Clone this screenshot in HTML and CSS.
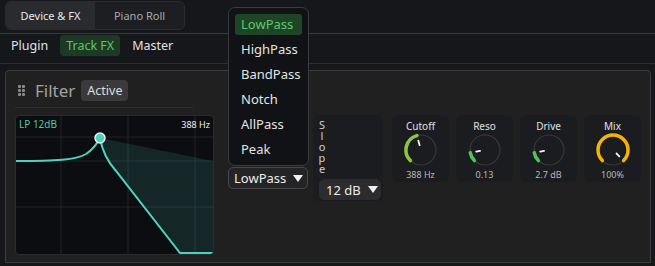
FILE: index.html
```html
<!DOCTYPE html>
<html lang="en">
<head>
    <meta charset="UTF-8">
    <title>Filter</title>
    <link rel="stylesheet" href="styles.css">
</head>
<body>
    <div class="tabs">
        <div class="tab-group">
            <div class="tab active">Device &amp; FX</div>
            <div class="tab">Piano Roll</div>
        </div>
    </div>
    <div class="subtabs">
        <span class="subtab">Plugin</span>
        <span class="subtab active">Track FX</span>
        <span class="subtab">Master</span>
    </div>

    <div class="panel">
        <div class="filter-main">
            <div class="panel-header">
                <svg class="handle" width="7" height="11" viewBox="0 0 7 11">
                    <rect x="0" y="0" width="3" height="3" rx="1"/>
                    <rect x="4" y="0" width="3" height="3" rx="1"/>
                    <rect x="0" y="4" width="3" height="3" rx="1"/>
                    <rect x="4" y="4" width="3" height="3" rx="1"/>
                    <rect x="0" y="8" width="3" height="3" rx="1"/>
                    <rect x="4" y="8" width="3" height="3" rx="1"/>
                </svg>
                <span class="title">Filter</span>
                <span class="badge">Active</span>
            </div>
            <div class="graph">
                <svg width="197" height="138" viewBox="0 0 197 138">
                    <g class="grid">
                        <line x1="45" y1="0" x2="45" y2="138"/>
                        <line x1="112" y1="0" x2="112" y2="138"/>
                        <line x1="179" y1="0" x2="179" y2="138"/>
                        <line x1="0" y1="21" x2="197" y2="21"/>
                        <line x1="0" y1="45" x2="197" y2="45"/>
                        <line x1="0" y1="91" x2="197" y2="91"/>
                    </g>
                    <path class="shade" d="M84 22 L197 45 L197 137 L164 137 L100 55 C92 46 86 34 84 22 Z"/>
                    <path class="curve" d="M0 45 C40 45 60 44 70 38 C76 34 80 30 84 22 C86 34 92 46 100 55 L164 137 L197 137"/>
                    <circle class="peak" cx="84" cy="22" r="5"/>
                    <text class="lbl-type" x="3" y="12">LP 12dB</text>
                    <text class="lbl-freq" x="194" y="12" text-anchor="end">388 Hz</text>
                </svg>
            </div>
        </div>

        <div class="type-col">
            <div class="select-wrap">
                <ul class="menu">
                    <li class="selected">LowPass</li>
                    <li>HighPass</li>
                    <li>BandPass</li>
                    <li>Notch</li>
                    <li>AllPass</li>
                    <li>Peak</li>
                </ul>
                <button class="select">LowPass <span class="caret"></span></button>
            </div>
        </div>

        <div class="slope">
            <div class="slope-label">Slope</div>
            <button class="select small">12 dB <span class="caret"></span></button>
        </div>

        <div class="knobs">
            <div class="knob-card">
                <div class="knob-title">Cutoff</div>
                <svg class="knob" width="34" height="34" viewBox="0 0 34 34">
                    <circle cx="17" cy="17" r="15"/>
                    <path class="arc" stroke="#8bc63e" d="M6.39 27.61 A15 15 0 0 1 12.87 2.58"/>
                    <line x1="15.6" y1="12.2" x2="14.3" y2="7.6"/>
                </svg>
                <div class="knob-value">388 Hz</div>
            </div>
            <div class="knob-card">
                <div class="knob-title">Reso</div>
                <svg class="knob" width="34" height="34" viewBox="0 0 34 34">
                    <circle cx="17" cy="17" r="15"/>
                    <path class="arc" stroke="#4dc257" d="M6.39 27.61 A15 15 0 0 1 2.23 19.6"/>
                    <line x1="12.1" y1="17.9" x2="8.2" y2="18.6"/>
                </svg>
                <div class="knob-value">0.13</div>
            </div>
            <div class="knob-card">
                <div class="knob-title">Drive</div>
                <svg class="knob" width="34" height="34" viewBox="0 0 34 34">
                    <circle cx="17" cy="17" r="15"/>
                    <path class="arc" stroke="#4dc257" d="M6.39 27.61 A15 15 0 0 1 2.23 19.6"/>
                    <line x1="12.1" y1="17.9" x2="8.2" y2="18.6"/>
                </svg>
                <div class="knob-value">2.7 dB</div>
            </div>
            <div class="knob-card">
                <div class="knob-title">Mix</div>
                <svg class="knob" width="34" height="34" viewBox="0 0 34 34">
                    <circle cx="17" cy="17" r="15"/>
                    <path class="arc" stroke="#f5b400" d="M6.39 27.61 A15 15 0 1 1 27.61 27.61"/>
                    <line x1="20.5" y1="20.5" x2="23.3" y2="23.3"/>
                </svg>
                <div class="knob-value">100%</div>
            </div>
        </div>
    </div>
</body>
</html>
```

FILE: styles.css
```css
* {
    box-sizing: border-box;
    margin: 0;
    padding: 0;
}

body {
    background-color: #16171b;
    color: #e4e4e4;
    font-family: "Noto Sans", "Open Sans", sans-serif;
    width: 655px;
    height: 266px;
    overflow: hidden;
}

/* top tabs */
.tabs {
    padding: 1px 0 0 5px;
    height: 34px;
    border-bottom: 1px solid #393a3e;
}

.tab-group {
    display: flex;
    width: 180px;
    height: 29px;
    background-color: #1d1e22;
    border: 1px solid #2a2b2f;
    border-radius: 6px;
    overflow: hidden;
}

.tab {
    width: 90px;
    font-size: 11px;
    line-height: 27px;
    text-align: center;
    color: #a9aaad;
}

.tab.active {
    background-color: #2a2b2f;
    color: #e6e6e6;
}

/* sub tabs */
.subtabs {
    display: flex;
    gap: 6px;
    height: 30px;
    padding: 1px 0 0 5px;
    border-bottom: 1px solid #2c2d31;
}

.subtab {
    height: 21px;
    padding: 0 6px;
    font-size: 12.5px;
    line-height: 21px;
    color: #e2e2e2;
    border-radius: 4px;
}

.subtab.active {
    background-color: #1d3a25;
    color: #5cc46a;
}

/* panel */
.panel {
    display: flex;
    align-items: flex-start;
    margin: 6px 4px 0 5px;
    padding: 9px 0 7px 9px;
    background-color: #202020;
    border: 1px solid #3c3c3c;
    border-radius: 4px 4px 0 0;
}

.filter-main {
    width: 199px;
}

.panel-header {
    display: flex;
    align-items: center;
    width: 178px;
    height: 28px;
    padding-bottom: 6px;
    border-bottom: 1px solid #2e2e2e;
}

.handle {
    fill: #8a8a8a;
    margin: 0 10px 0 3px;
}

.title {
    font-size: 17px;
    color: #a2a2a2;
    line-height: 21px;
    margin-right: 6px;
}

.badge {
    height: 21px;
    padding: 0 6px;
    font-size: 12.5px;
    line-height: 21px;
    background-color: #3a3a3c;
    color: #dedede;
    border-radius: 4px;
}

.graph {
    margin-top: 7px;
    width: 199px;
    height: 140px;
    background-color: #0c0d10;
    border: 1px solid #2a2b2e;
    border-radius: 4px;
    overflow: hidden;
}

.graph svg {
    display: block;
}

.grid line {
    stroke: #222428;
    stroke-width: 1;
}

.shade {
    fill: rgba(70, 200, 180, 0.14);
}

.curve {
    fill: none;
    stroke: #4fd1bd;
    stroke-width: 2;
}

.peak {
    fill: #4fd1bd;
    stroke: #e6f4f1;
    stroke-width: 1.5;
}

.lbl-type {
    fill: #4fc9b0;
    font-size: 10px;
}

.lbl-freq {
    fill: #f0f0f0;
    font-size: 9px;
}

/* filter type select */
.type-col {
    width: 80px;
    margin: 87px 0 0 14px;
}

.select-wrap {
    position: relative;
}

.menu {
    position: absolute;
    left: 0;
    bottom: calc(100% + 1px);
    display: flex;
    flex-direction: column;
    gap: 4px;
    width: 81px;
    padding: 6px 6px 5px;
    list-style: none;
    background-color: #111215;
    border: 1px solid #3a3b3f;
    border-radius: 7px;
    z-index: 2;
}

.menu li {
    height: 21px;
    padding-left: 6px;
    font-size: 13px;
    line-height: 21px;
    color: #e4e4e4;
    border-radius: 3px;
}

.menu li.selected {
    background-color: #1e4526;
    color: #5fc86a;
}

.select {
    display: flex;
    align-items: center;
    width: 80px;
    height: 22px;
    padding: 0 5px;
    font: inherit;
    font-size: 13px;
    white-space: nowrap;
    color: #ececec;
    background-color: #242426;
    border: 1px solid #46474b;
    border-radius: 5px;
}

.caret {
    width: 0;
    height: 0;
    margin-left: 7px;
    border-left: 5px solid transparent;
    border-right: 5px solid transparent;
    border-top: 7px solid #f0f0f0;
}

/* slope */
.slope {
    width: 70px;
    height: 86px;
    margin: 35px 0 0 5px;
    padding: 4px 0 0 5px;
    background-color: #1b1c1f;
    border-radius: 5px;
}

.slope-label {
    width: 8px;
    word-break: break-all;
    text-align: center;
    font-size: 11px;
    line-height: 11px;
    color: #cfcfcf;
}

.select.small {
    width: 62px;
    height: 21px;
    margin: 5px 0 0 1px;
    padding: 0 6px;
    background-color: #2c2c2e;
    border-color: #2c2c2e;
}

/* knobs */
.knobs {
    display: flex;
    gap: 7px;
    margin: 35px 0 0 9px;
}

.knob-card {
    width: 57px;
    height: 67px;
    padding-top: 4px;
    background-color: #1b1c1f;
    border-radius: 6px;
    text-align: center;
}

.knob-title {
    font-size: 10px;
    line-height: 14px;
    color: #e0e0e0;
}

.knob {
    display: block;
    margin: 0 auto;
}

.knob circle {
    fill: none;
    stroke: #38393c;
    stroke-width: 1.2;
}

.knob .arc {
    fill: none;
    stroke-width: 3.5;
    stroke-linecap: round;
}

.knob line {
    stroke: #f2f2f2;
    stroke-width: 1.8;
    stroke-linecap: round;
}

.knob-value {
    margin-top: 2px;
    font-size: 9px;
    line-height: 12px;
    color: #b8b8b8;
}
```
